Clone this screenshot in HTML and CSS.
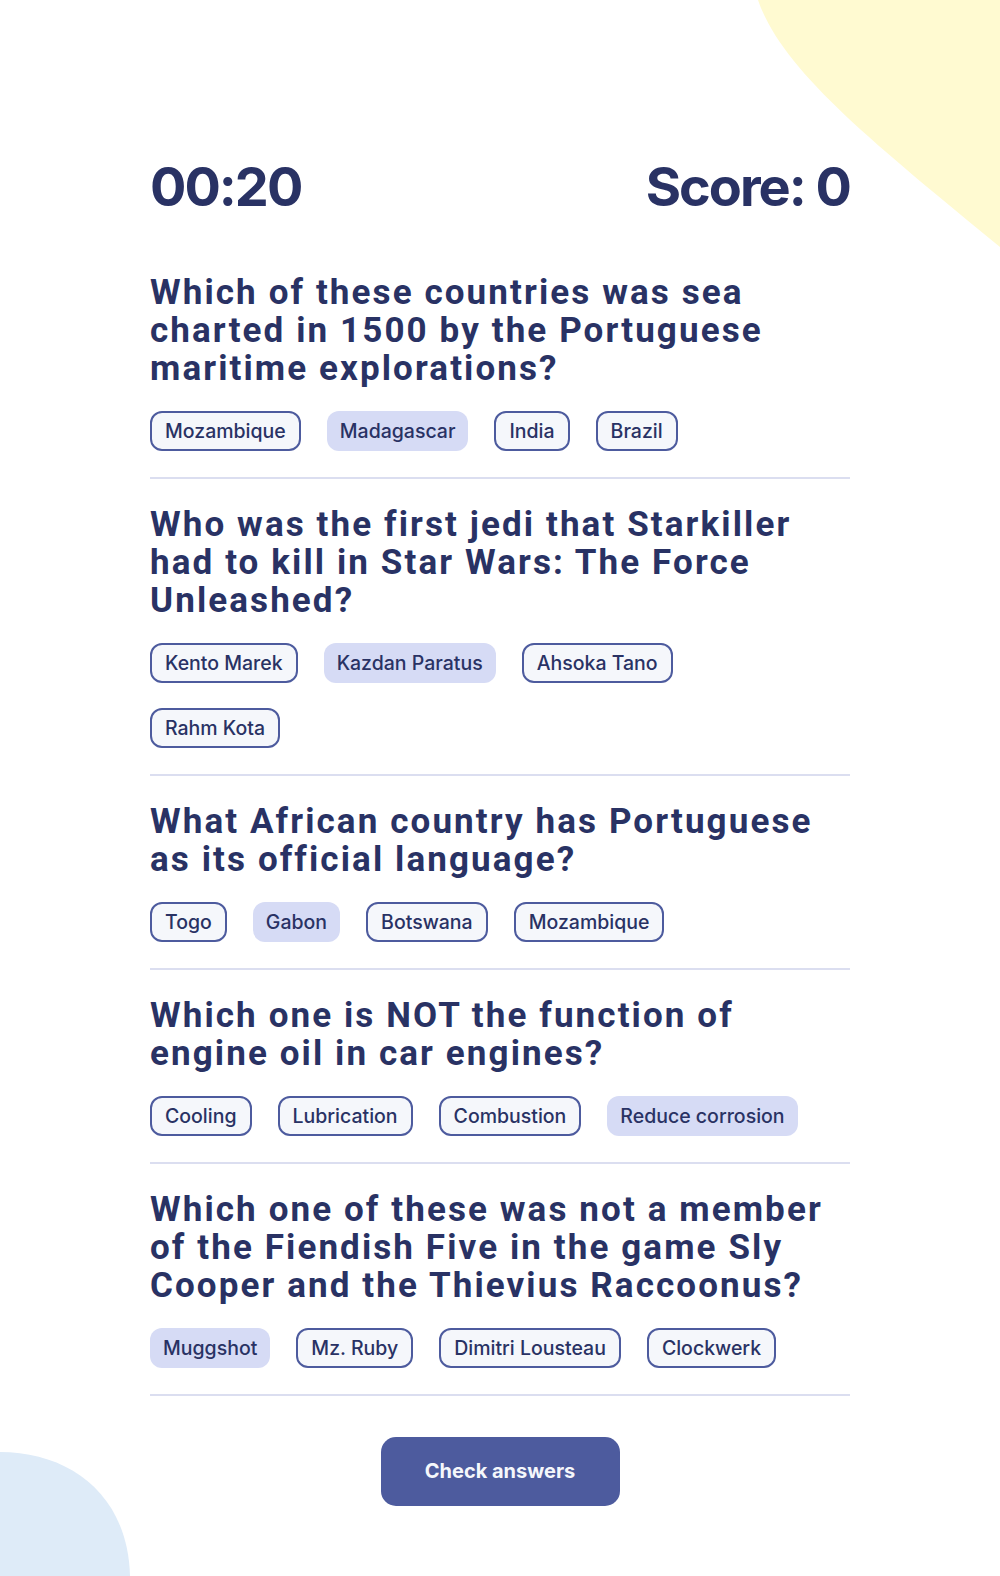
FILE: index.html
```html
<!DOCTYPE html>
<html lang="en">
<head>
<meta charset="utf-8">
<title>Quizzical</title>
<link rel="stylesheet" href="styles.css">
</head>
<body>
<div class="page">
  <svg class="blob blob-yellow" width="260" height="260" viewBox="0 0 260 260" aria-hidden="true">
    <path d="M18 0 C42 70 130 140 260 247 L260 0 Z" fill="#fffad1"/>
  </svg>
  <svg class="blob blob-blue" width="140" height="130" viewBox="0 0 140 130" aria-hidden="true">
    <path d="M0 6 C70 6 128 49 130 130 L0 130 Z" fill="#deebf8"/>
  </svg>

  <main class="quiz">
    <header class="stats">
      <span class="timer">00:20</span>
      <span class="score">Score: 0</span>
    </header>

    <section class="question">
      <h2 class="question-title">Which of these countries was sea charted in 1500 by the Portuguese maritime explorations?</h2>
      <div class="answers">
        <button class="answer">Mozambique</button>
        <button class="answer selected">Madagascar</button>
        <button class="answer">India</button>
        <button class="answer">Brazil</button>
      </div>
    </section>

    <section class="question">
      <h2 class="question-title">Who was the first jedi that Starkiller had to kill in Star Wars: The Force Unleashed?</h2>
      <div class="answers">
        <button class="answer">Kento Marek</button>
        <button class="answer selected">Kazdan Paratus</button>
        <button class="answer">Ahsoka Tano</button>
        <button class="answer">Rahm Kota</button>
      </div>
    </section>

    <section class="question">
      <h2 class="question-title">What African country has Portuguese as its official language?</h2>
      <div class="answers">
        <button class="answer">Togo</button>
        <button class="answer selected">Gabon</button>
        <button class="answer">Botswana</button>
        <button class="answer">Mozambique</button>
      </div>
    </section>

    <section class="question">
      <h2 class="question-title">Which one is NOT the function of engine oil in car engines?</h2>
      <div class="answers">
        <button class="answer">Cooling</button>
        <button class="answer">Lubrication</button>
        <button class="answer">Combustion</button>
        <button class="answer selected">Reduce corrosion</button>
      </div>
    </section>

    <section class="question">
      <h2 class="question-title">Which one of these was not a member of the Fiendish Five in the game Sly Cooper and the Thievius Raccoonus?</h2>
      <div class="answers">
        <button class="answer selected">Muggshot</button>
        <button class="answer">Mz. Ruby</button>
        <button class="answer">Dimitri Lousteau</button>
        <button class="answer">Clockwerk</button>
      </div>
    </section>

    <div class="actions">
      <button class="check">Check answers</button>
    </div>
  </main>
</div>
</body>
</html>
```

FILE: styles.css
```css
* {
  box-sizing: border-box;
}

html, body {
  margin: 0;
  padding: 0;
  background: #ffffff;
}

body {
  font-family: "Inter", "Noto Sans", sans-serif;
  color: #293264;
}

.page {
  position: relative;
  min-height: 1576px;
  overflow: hidden;
}

.blob {
  position: absolute;
  display: block;
  z-index: 0;
}

.blob-yellow {
  top: 0;
  right: 0;
}

.blob-blue {
  bottom: 0;
  left: 0;
}

.quiz {
  position: relative;
  z-index: 1;
  width: 700px;
  margin: 0 auto;
  padding-top: 160px;
}

.stats {
  display: flex;
  justify-content: space-between;
  align-items: baseline;
  font-family: "Inter", sans-serif;
  font-weight: 700;
  font-size: 54px;
  line-height: 54px;
  letter-spacing: -2px;
  margin-bottom: 33px;
}

.question {
  padding: 27px 0 26px;
  border-bottom: 2px solid #dbdef0;
}

.question-title {
  margin: 0 0 23px;
  font-family: "Roboto", sans-serif;
  font-weight: 700;
  font-size: 35px;
  line-height: 38px;
  letter-spacing: 2.1px;
}

.answers {
  display: flex;
  flex-wrap: wrap;
  row-gap: 25px;
}

.answer {
  font-family: "Inter", sans-serif;
  font-weight: 500;
  font-size: 19.5px;
  line-height: 20px;
  color: #293264;
  padding: 8px 13px;
  margin-right: 26px;
  border: 2px solid #4d5b9e;
  border-radius: 12px;
  background: #f5f7fb;
  cursor: pointer;
}

.answer.selected {
  background: #d6dbf5;
  border: 0;
  padding: 10px 13px;
}

.actions {
  display: flex;
  justify-content: center;
  padding-top: 41px;
}

.check {
  font-family: "Inter", sans-serif;
  font-weight: 700;
  font-size: 20px;
  line-height: 23px;
  color: #f5f7fb;
  background: #4d5b9e;
  border: none;
  border-radius: 15px;
  width: 239px;
  padding: 23px 0;
  cursor: pointer;
}
```
